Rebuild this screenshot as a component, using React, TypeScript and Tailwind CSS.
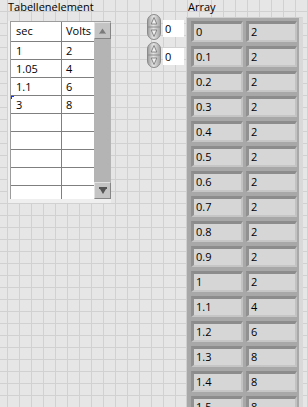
import React from "react";

const tableRows: [string, string][] = [
  ["1", "2"],
  ["1.05", "4"],
  ["1.1", "6"],
  ["3", "8"],
  ["", ""],
  ["", ""],
  ["", ""],
  ["", ""],
];

const arr: [string, string][] = [
  ["0", "2"],
  ["0.1", "2"],
  ["0.2", "2"],
  ["0.3", "2"],
  ["0.4", "2"],
  ["0.5", "2"],
  ["0.6", "2"],
  ["0.7", "2"],
  ["0.8", "2"],
  ["0.9", "2"],
  ["1", "2"],
  ["1.1", "4"],
  ["1.2", "6"],
  ["1.3", "8"],
  ["1.4", "8"],
  ["1.5", "8"],
];

function Spinner({ id }: { id: string }) {
  return (
    <svg width="14" height="26" viewBox="0 0 14 26" className="block">
      <defs>
        <linearGradient id={id} x1="0" x2="1" y1="0" y2="0">
          <stop offset="0" stopColor="#9a9a9a" />
          <stop offset="0.45" stopColor="#e6e6e6" />
          <stop offset="1" stopColor="#a2a2a2" />
        </linearGradient>
      </defs>
      <rect x="0.5" y="0.5" width="13" height="25" rx="6.5" fill={`url(#${id})`} stroke="#8a8a8a" />
      <line x1="1" y1="13" x2="13" y2="13" stroke="#8a8a8a" />
      <path d="M7 3.5 L4.2 10 L9.8 10 Z" fill="#f0f0f0" stroke="#6e6e6e" strokeWidth="0.8" />
      <path d="M7 22.5 L4.2 16 L9.8 16 Z" fill="#f0f0f0" stroke="#6e6e6e" strokeWidth="0.8" />
    </svg>
  );
}

function ScrollBtn({ down }: { down?: boolean }) {
  return (
    <div className="h-[17px] w-[17px] flex items-center justify-center bg-[#c4c4c4] border-t border-l border-t-[#e2e2e2] border-l-[#e2e2e2] border-b border-r border-b-[#858585] border-r-[#858585]">
      {down ? (
        <svg width="8" height="8" viewBox="0 0 8 8">
          <rect x="0" y="0" width="8" height="2" fill="#555" />
          <path d="M1 2 L7 2 L4 7 Z" fill="#555" />
        </svg>
      ) : (
        <svg width="7" height="6" viewBox="0 0 7 6">
          <path d="M3.5 0.5 L6.5 5 L0.5 5 Z" fill="#7a7a7a" />
          <rect x="0" y="5" width="7" height="1" fill="#9a9a9a" />
        </svg>
      )}
    </div>
  );
}

export default function App() {
  return (
    <div className="relative w-[308px] h-[407px] overflow-hidden bg-[#e6e6e6] bg-[linear-gradient(to_right,#d1d1d1_1px,transparent_1px),linear-gradient(to_bottom,#d1d1d1_1px,transparent_1px)] bg-size-[12px_12px] bg-position-[7px_11px] font-['Open_Sans',sans-serif] text-[11px] text-black">
      <div className="flex items-start">
        {/* Table control */}
        <div className="ml-[8px] flex flex-col">
          <div className="h-[21px] leading-[13px] whitespace-nowrap">Tabellenelement</div>
          <div className="pl-[2px] pb-[4px] bg-[#efefef]">
            <div className="flex border-t border-l border-[#9c9c9c] bg-white">
              <div className="flex flex-col">
                <div className="flex h-[20px] border-b border-[#7f7f7f] leading-[18px]">
                  <div className="w-[51px] border-r border-[#7f7f7f] pl-[5px]">sec</div>
                  <div className="w-[32px] pl-[4px]">Volts</div>
                </div>
                {tableRows.map((r, i) => (
                  <div key={i} className="flex h-[18px] border-b border-[#7f7f7f] leading-[17px]">
                    <div className="relative w-[51px] border-r border-[#7f7f7f] pl-[5px]">
                      {r[0] === "3" && (
                        <span className="absolute left-0 top-0 w-[3px] h-[3px] border-t border-l border-[#1030ff]" />
                      )}
                      {r[0]}
                    </div>
                    <div className="w-[32px] pl-[4px]">{r[1]}</div>
                  </div>
                ))}
                <div className="flex h-[13px]">
                  <div className="w-[51px] border-r border-[#7f7f7f]" />
                  <div className="w-[32px]" />
                </div>
              </div>
              <div className="w-[17px] flex flex-col justify-between bg-[#b4b4b4]">
                <ScrollBtn />
                <ScrollBtn down />
              </div>
            </div>
          </div>
        </div>

        {/* Index spinners */}
        <div className="ml-[36px] mt-[14px] flex flex-col gap-[2px]">
          {["a", "b"].map((k) => (
            <div key={k} className="flex items-start">
              <Spinner id={`sg-${k}`} />
              <div className="ml-[2px] mt-[6px] w-[21px] h-[17px] bg-white pl-[2px] leading-[17px]">0</div>
            </div>
          ))}
        </div>

        {/* Array */}
        <div className="ml-[2px] flex flex-col">
          <div className="h-[17px] pl-[2px] leading-[13px]">Array</div>
          <div className="w-[117px] h-[400px] bg-[#a8a8a8] border-t border-l border-[#cfcfcf] border-r-[4px] border-r-[#d9d9d9] pl-[4px] pt-[3px] pr-[2px]">
            <div className="flex flex-col gap-[4px]">
              {arr.map((r, i) => (
                <div key={i} className="flex gap-[3px]">
                  <div className="w-[52px] h-[21px] bg-[#d6d6d6] border-t-[3px] border-l-[3px] border-t-[#8c8c8c] border-l-[#919191] border-b-[2px] border-r-[2px] border-b-[#c6c6c6] border-r-[#c2c2c2] pl-[2px] leading-[16px]">
                    {r[0]}
                  </div>
                  <div className="w-[51px] h-[21px] bg-[#d6d6d6] border-t-[3px] border-l-[3px] border-t-[#8c8c8c] border-l-[#919191] border-b-[2px] border-r-[2px] border-b-[#c6c6c6] border-r-[#c2c2c2] pl-[2px] leading-[16px]">
                    {r[1]}
                  </div>
                </div>
              ))}
            </div>
          </div>
        </div>
      </div>
    </div>
  );
}
